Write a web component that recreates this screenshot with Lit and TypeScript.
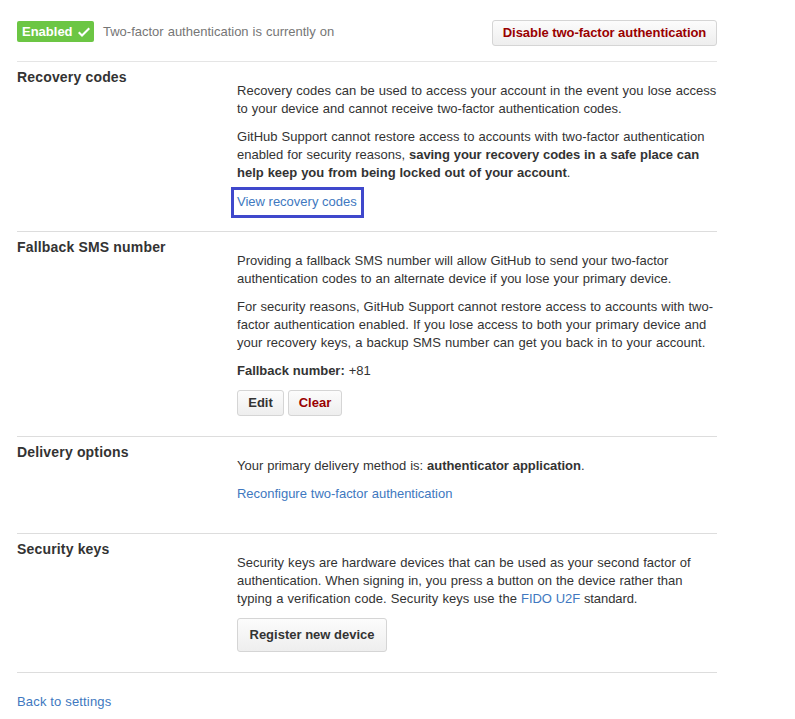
import { LitElement, html, css } from "lit";
import { customElement } from "lit/decorators.js";

@customElement("app-root")
export class AppRoot extends LitElement {
  static styles = css`
    :host {
      display: block;
      box-sizing: border-box;
      width: 795px;
      height: 719px;
      padding-left: 17px;
      background: #fff;
      color: #333;
      font: 13px/18px "Liberation Sans", Arial, sans-serif;
      overflow: hidden;
    }
    .page { width: 700px; }
    .status {
      display: flex;
      box-sizing: border-box;
      height: 62px;
      padding-top: 20px;
      align-items: flex-start;
      border-bottom: 1px solid #e5e5e5;
    }
    .badge {
      display: flex;
      align-items: center;
      box-sizing: border-box;
      width: 77px;
      height: 21px;
      margin-top: 1px;
      padding-left: 5px;
      gap: 5px;
      border-radius: 2px;
      background: #6cc644;
      color: #fff;
      font-weight: bold;
    }
    .state { margin: 3px 0 0 9px; color: #767676; word-spacing: 0.35px; }
    .push { margin-left: auto; }
    .btn {
      box-sizing: border-box;
      height: 26px;
      padding: 0;
      border: 1px solid #d5d5d5;
      border-radius: 3px;
      background: linear-gradient(#fcfcfc, #eee);
      color: #333;
      font: bold 13px/18px "Liberation Sans", Arial, sans-serif;
      text-align: center;
      white-space: nowrap;
    }
    .danger { color: #900; }
    .disable { width: 225px; letter-spacing: -0.05px; }
    .edit { width: 47px; }
    .clear { width: 54px; }
    .register { width: 150px; height: 34px; }
    .section {
      display: grid;
      grid-template-columns: 220px 480px;
      box-sizing: border-box;
      border-bottom: 1px solid #ddd;
    }
    .recovery { height: 170px; }
    .fallback { height: 205px; }
    .delivery { height: 97px; }
    .keys { height: 139px; }
    h3 { margin: 6px 0 0; font-size: 14px; line-height: 18px; letter-spacing: 0.17px; }
    .body { padding-top: 20px; }
    p { margin: 0 0 10px; word-spacing: 0.39px; }
    b { letter-spacing: -0.048px; }
    .slim { letter-spacing: -0.08px; }
    .wide { letter-spacing: -0.02px; }
    .line { display: block; width: max-content; white-space: nowrap; }
    .tight { letter-spacing: -0.02px; }
    .loose { letter-spacing: 0.018px; }
    .looser { letter-spacing: 0.035px; }
    .loosest { letter-spacing: 0.07px; }
    .trim { letter-spacing: -0.09px; }
    a { color: #4078c0; text-decoration: none; }
    .marked {
      display: block;
      box-sizing: border-box;
      width: 133px;
      height: 31px;
      margin: -5px 0 0 -6px;
      padding: 3px;
      border: 3px solid #3f48cc;
    }
    .row { display: flex; gap: 4px; }
    .back { display: block; width: max-content; margin-top: 20px; letter-spacing: 0.16px; }
  `;

  render() {
    return html`
      <main class="page">
        <header class="status">
          <span class="badge">
            <span>Enabled</span>
            <svg width="12" height="16" viewBox="0 0 12 16">
              <path d="M12 5 4 13 0 9 1.5 7.5 4 10 10.5 3.5Z" fill="#fff" />
            </svg>
          </span>
          <span class="state">Two-factor authentication is currently on</span>
          <button class="btn danger disable push">Disable two-factor authentication</button>
        </header>
        <section class="section recovery">
          <h3>Recovery codes</h3>
          <div class="body">
            <p>
              <span class="line looser">Recovery codes can be used to access your account in the event you lose access</span>
              <span class="line">to your device and cannot receive two-factor authentication codes.</span>
            </p>
            <p>
              <span class="line loose">GitHub Support cannot restore access to accounts with two-factor authentication</span>
              <span class="line">enabled for security reasons, <b class="slim">saving your recovery codes in a safe place can</b></span>
              <span class="line"><b class="wide">help keep you from being locked out of your account</b>.</span>
            </p>
            <a class="marked">View recovery codes</a>
          </div>
        </section>
        <section class="section fallback">
          <h3>Fallback SMS number</h3>
          <div class="body">
            <p>
              <span class="line">Providing a fallback SMS number will allow GitHub to send your two-factor</span>
              <span class="line">authentication codes to an alternate device if you lose your primary device.</span>
            </p>
            <p>
              <span class="line loose">For security reasons, GitHub Support cannot restore access to accounts with two-</span>
              <span class="line loose">factor authentication enabled. If you lose access to both your primary device and</span>
              <span class="line looser">your recovery keys, a backup SMS number can get you back in to your account.</span>
            </p>
            <p><b class="wide">Fallback number:</b> +81</p>
            <div class="row">
              <button class="btn edit">Edit</button>
              <button class="btn danger clear">Clear</button>
            </div>
          </div>
        </section>
        <section class="section delivery">
          <h3>Delivery options</h3>
          <div class="body">
            <p class="tight">Your primary delivery method is: <b>authenticator application</b>.</p>
            <p class="tight"><a>Reconfigure two-factor authentication</a></p>
          </div>
        </section>
        <section class="section keys">
          <h3>Security keys</h3>
          <div class="body">
            <p>
              <span class="line loose">Security keys are hardware devices that can be used as your second factor of</span>
              <span class="line tight">authentication. When signing in, you press a button on the device rather than</span>
              <span class="line loosest">typing a verification code. Security keys use the <span class="trim"><a>FIDO U2F</a> standard.</span></span>
            </p>
            <button class="btn register">Register new device</button>
          </div>
        </section>
        <a class="back">Back to settings</a>
      </main>
    `;
  }
}
